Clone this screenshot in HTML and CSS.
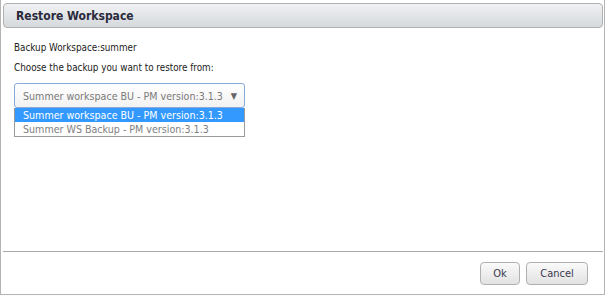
FILE: index.html
```html
<!DOCTYPE html>
<html lang="en">

<head>
    <meta charset="UTF-8">
    <meta name="viewport" content="width=device-width, initial-scale=1.0">
    <title>Restore Workspace</title>
    <link rel="stylesheet" href="styles.css">
</head>

<body>
    <div class="dialog">
        <div class="dialog-header">
            <h3>Restore Workspace</h3>
        </div>

        <!-- Body -->
        <div class="dialog-body">
            <p class="label">Backup Workspace:summer</p>
            <p class="label">Choose the backup you want to restore from:</p>
            <div class="picker">
                <div class="picker-box">
                    <span>Summer workspace BU - PM version:3.1.3</span>
                    <span class="arrow">&#9660;</span>
                </div>
                <ul class="picker-list">
                    <li class="selected">Summer workspace BU - PM version:3.1.3</li>
                    <li>Summer WS Backup - PM version:3.1.3</li>
                </ul>
            </div>
        </div>

        <!-- Footer -->
        <div class="dialog-footer">
            <button class="btn-ok">Ok</button>
            <button class="btn-cancel">Cancel</button>
        </div>
    </div>
</body>

</html>
```

FILE: styles.css
```css
* {
    margin: 0;
    padding: 0;
    box-sizing: border-box;
}

body {
    font-family: "DejaVu Sans Condensed", "DejaVu Sans", Verdana, sans-serif;
    font-stretch: condensed;
    background: #ffffff;
    width: 606px;
    height: 296px;
}

.dialog {
    width: 605px;
    height: 295px;
    border: 1px solid #b4b4b4;
    border-top: none;
    display: flex;
    flex-direction: column;
    padding: 3px 1px 0 2px;
}

.dialog-header {
    height: 25px;
    border: 1px solid #b0b0b0;
    border-radius: 4px;
    background: linear-gradient(#f0f1f3, #d5d9dc);
    display: flex;
    align-items: center;
    padding-left: 12px;
}

.dialog-header h3 {
    font-size: 12px;
    color: #2a2a3c;
}

.dialog-body {
    flex: 1;
    padding: 14px 11px 0;
    border-bottom: 1px solid #a8a8a8;
}

.label {
    font-size: 9.8px;
    color: #222;
    height: 20px;
    line-height: 12px;
}

.picker {
    width: 231px;
    margin-top: 1px;
}

.picker-box {
    height: 25px;
    border: 1px solid #8aa8d8;
    border-radius: 3px;
    background: linear-gradient(#ffffff, #f2f2f2);
    display: flex;
    align-items: center;
    justify-content: space-between;
    padding: 0 7px 0 8px;
    font-size: 10.6px;
    color: #7a7a7a;
    white-space: nowrap;
}

.picker-box .arrow {
    font-size: 9px;
    color: #666;
}

.picker-list {
    list-style: none;
    border: 1px solid #9a9a9a;
    border-top: none;
    font-size: 10.6px;
    white-space: nowrap;
}

.picker-list li {
    height: 14px;
    line-height: 14px;
    padding-left: 8px;
    color: #808080;
}

.picker-list li.selected {
    background: #3399ff;
    color: #ffffff;
}

.dialog-footer {
    height: 42px;
    display: flex;
    justify-content: flex-end;
    align-items: flex-start;
    gap: 6px;
    padding: 10px 15px 0 0;
}

button {
    font-family: inherit;
    font-stretch: condensed;
    font-size: 11px;
    color: #3a3a50;
    height: 23px;
    border: 1px solid #b0b0b0;
    border-radius: 4px;
    background: linear-gradient(#fafafa, #e2e2e2);
}

.btn-ok {
    width: 40px;
}

.btn-cancel {
    width: 62px;
}
```
